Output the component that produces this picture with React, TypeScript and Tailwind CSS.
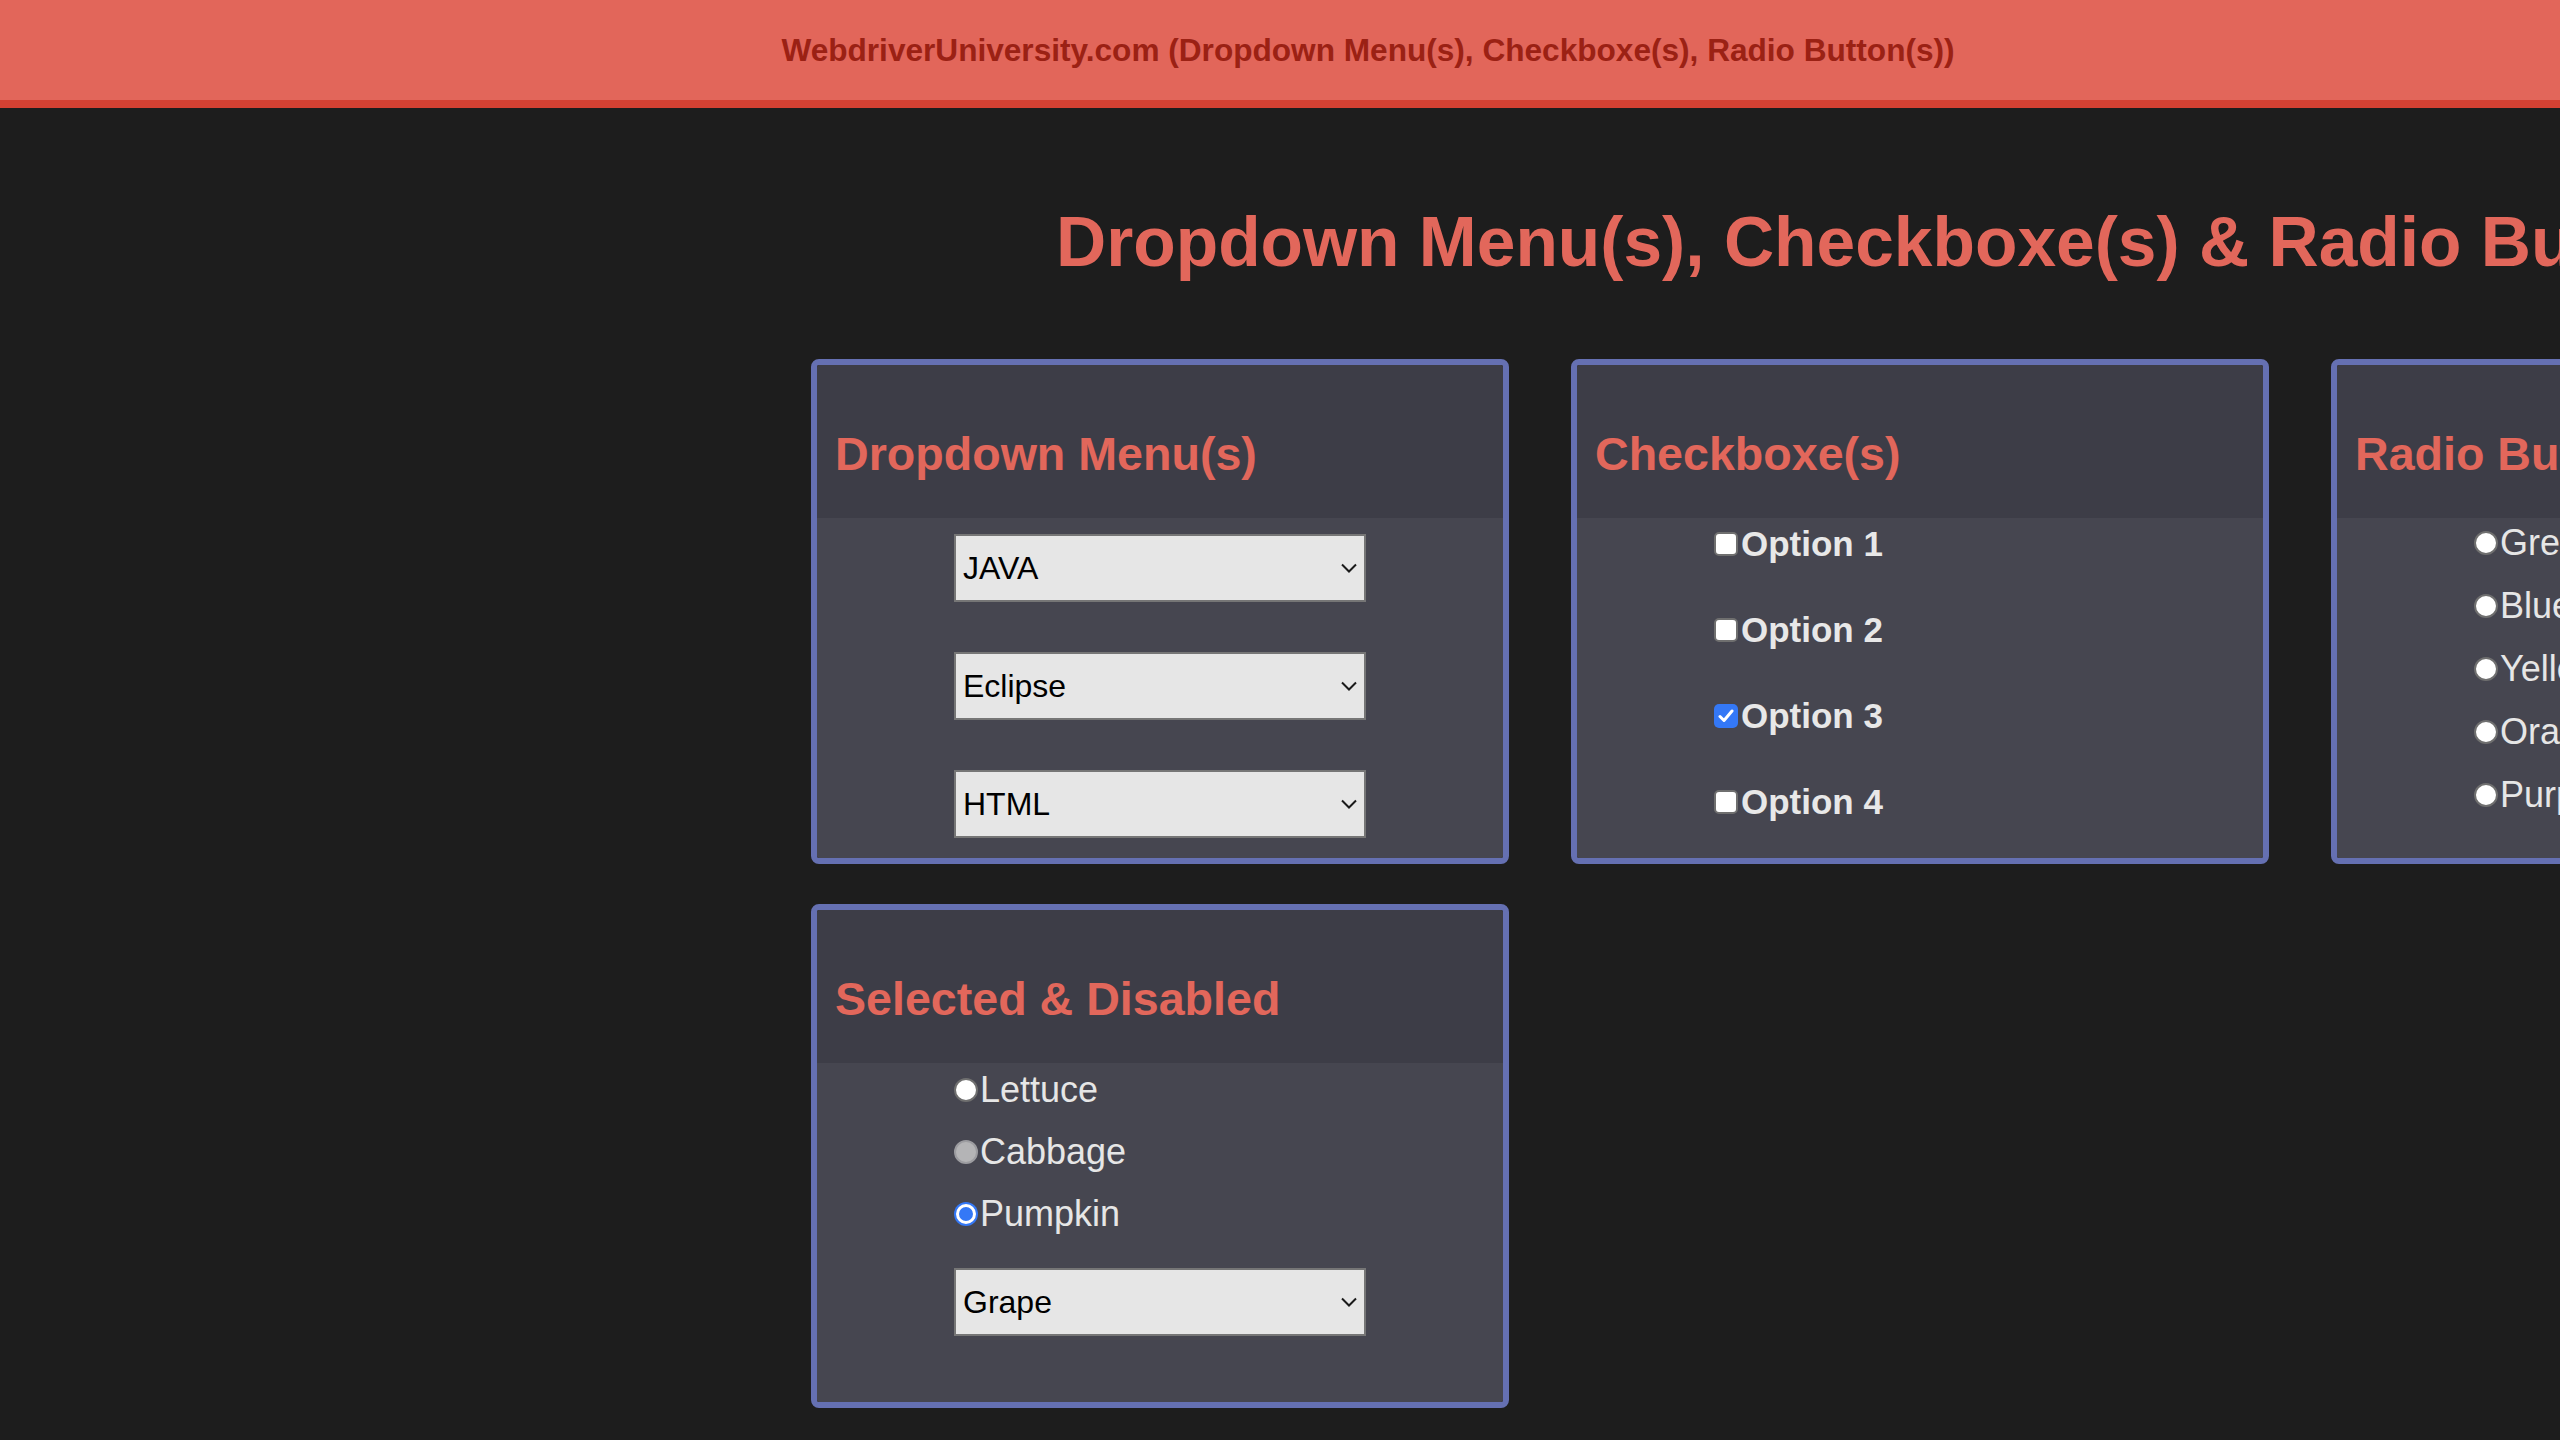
import React from "react";

const Chevron = () => (
  <svg width="16" height="10" viewBox="0 0 16 10" fill="none">
    <path d="M1 1.5 L8 8.5 L15 1.5" stroke="#1a1a1a" strokeWidth="2" />
  </svg>
);

const Select = ({ label }: { label: string }) => (
  <div className="w-[412px] h-[68px] border-2 border-[#767676] bg-[#e6e6e6] flex items-center justify-between pl-[7px] pr-[7px] text-[32px] text-black leading-[36px]">
    <span>{label}</span>
    <Chevron />
  </div>
);

const Checkbox = ({ checked }: { checked?: boolean }) =>
  checked ? (
    <span className="w-[24px] h-[24px] rounded-[5px] bg-[#3478f6] flex items-center justify-center shrink-0">
      <svg width="16" height="14" viewBox="0 0 16 14">
        <path d="M2 7.5 L6 11.5 L14 2" stroke="white" strokeWidth="3" fill="none" strokeLinecap="round" strokeLinejoin="round" />
      </svg>
    </span>
  ) : (
    <span className="w-[24px] h-[24px] rounded-[5px] bg-white border-2 border-[#6f6f6f] shrink-0" />
  );

const Radio = ({ state }: { state?: "checked" | "disabled" }) => {
  if (state === "checked")
    return (
      <span className="w-[24px] h-[24px] rounded-full bg-[#3478f6] p-[2px] shrink-0">
        <span className="block w-[20px] h-[20px] rounded-full border-[3px] border-white bg-[#3478f6]" />
      </span>
    );
  if (state === "disabled")
    return <span className="w-[24px] h-[24px] rounded-full bg-[#b4b4b6] border-2 border-[#9c9ca0] shrink-0" />;
  return <span className="w-[24px] h-[24px] rounded-full bg-white border-2 border-[#6f6f6f] shrink-0" />;
};

const Card = ({ title, children }: { title: string; children: React.ReactNode }) => (
  <div className="border-[6px] border-[#6570b2] rounded-[8px] overflow-hidden flex flex-col">
    <div className="h-[153px] bg-[#3d3d47] pt-[65px] pl-[18px] shrink-0">
      <h2 className="text-[46.6px] leading-[48px] font-bold text-[#e2675b] whitespace-nowrap">{title}</h2>
    </div>
    <div className="flex-1 bg-[#464650]">{children}</div>
  </div>
);

export default function App() {
  return (
    <div
      className="w-[2560px] h-[1440px] overflow-hidden bg-[#1d1d1d]"
      style={{ fontFamily: '"Liberation Sans", Arial, Helvetica, sans-serif' }}
    >
      <div className="h-[108px] bg-[#e2665a] border-b-[8px] border-[#d44133]">
        <div className="w-[2736px] h-full flex items-center justify-center">
          <span className="text-[31.6px] font-bold text-[#9b2114] whitespace-nowrap leading-[36px]">
            WebdriverUniversity.com (Dropdown Menu(s), Checkboxe(s), Radio Button(s))
          </span>
        </div>
      </div>

      <h1 className="mt-[98px] pl-[1056px] text-[69.5px] leading-[72px] font-bold text-[#e2675b] whitespace-nowrap">
        Dropdown Menu(s), Checkboxe(s) &amp; Radio Button(s)
      </h1>

      <div className="mt-[81px] pl-[811px] grid grid-cols-[698px_698px_698px] gap-x-[62px] gap-y-[40px] w-max">
        <Card title="Dropdown Menu(s)">
          <div className="pt-[16px] pb-[20px] flex flex-col items-center gap-[50px]">
            <Select label="JAVA" />
            <Select label="Eclipse" />
            <Select label="HTML" />
          </div>
        </Card>

        <Card title="Checkboxe(s)">
          <div className="pt-[8px] flex justify-center">
            <div className="w-[412px] flex flex-col gap-[50px]">
              {["Option 1", "Option 2", "Option 3", "Option 4"].map((o, i) => (
                <label key={o} className="h-[36px] flex items-center">
                  <Checkbox checked={i === 2} />
                  <span className="ml-[3px] text-[35px] leading-[36px] font-bold text-[#e8e8e8]">{o}</span>
                </label>
              ))}
            </div>
          </div>
        </Card>

        <Card title="Radio Button(s)">
          <div className="pt-[7px] flex justify-center">
            <div className="w-[412px] flex flex-col gap-[27px]">
              {["Green", "Blue", "Yellow", "Orange", "Purple"].map((o) => (
                <label key={o} className="h-[36px] flex items-center">
                  <Radio />
                  <span className="ml-[2px] text-[36px] leading-[36px] text-[#e6e6e6]">{o}</span>
                </label>
              ))}
            </div>
          </div>
        </Card>

        <Card title="Selected & Disabled">
          <div className="pt-[9px] pb-[66px] flex flex-col items-center">
            <div className="w-[412px] flex flex-col gap-[26px]">
              <label className="h-[36px] flex items-center">
                <Radio />
                <span className="ml-[2px] text-[36px] leading-[36px] text-[#e6e6e6]">Lettuce</span>
              </label>
              <label className="h-[36px] flex items-center">
                <Radio state="disabled" />
                <span className="ml-[2px] text-[36px] leading-[36px] text-[#e6e6e6]">Cabbage</span>
              </label>
              <label className="h-[36px] flex items-center">
                <Radio state="checked" />
                <span className="ml-[2px] text-[36px] leading-[36px] text-[#e6e6e6]">Pumpkin</span>
              </label>
            </div>
            <div className="mt-[36px]">
              <Select label="Grape" />
            </div>
          </div>
        </Card>
      </div>
    </div>
  );
}
